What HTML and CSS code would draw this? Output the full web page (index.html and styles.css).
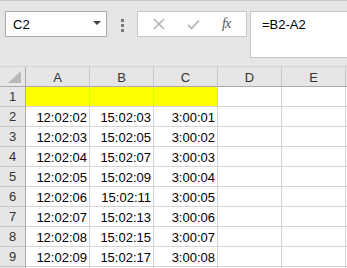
FILE: index.html
```html
<!DOCTYPE html>
<html lang="en">
<head>
    <meta charset="utf-8">
    <title>Sheet</title>
    <link rel="stylesheet" href="styles.css">
</head>
<body>

<div class="formula-bar">
    <div class="name-box">
        <span>C2</span>
        <svg class="drop" width="8" height="4" viewBox="0 0 8 4"><path d="M0 0H8L4 4Z" fill="#444"/></svg>
    </div>
    <div class="grip"><i></i><i></i><i></i></div>
    <div class="fn-box">
        <svg width="12" height="12" viewBox="0 0 12 12"><path d="M1 1L11 11M11 1L1 11" stroke="#b4b4b4" stroke-width="1.6"/></svg>
        <svg width="13" height="11" viewBox="0 0 13 11"><path d="M1 6L4.5 9.5L12 1.5" stroke="#b4b4b4" stroke-width="1.8" fill="none"/></svg>
        <span class="fx">fx</span>
    </div>
    <div class="formula">=B2-A2</div>
</div>

<div class="sheet">
    <div class="hd corner"><svg width="14" height="13" viewBox="0 0 14 13"><path d="M13 0V12H0Z" fill="#b9b9b9"/></svg></div>
    <div class="hd col">A</div>
    <div class="hd col">B</div>
    <div class="hd col">C</div>
    <div class="hd col">D</div>
    <div class="hd col">E</div>
    <div class="hd col"></div>

    <div class="hd row">1</div>
    <div class="cell yellow"></div><div class="cell yellow"></div><div class="cell yellow"></div><div class="cell"></div><div class="cell"></div><div class="cell"></div>

    <div class="hd row">2</div>
    <div class="cell">12:02:02</div><div class="cell">15:02:03</div><div class="cell">3:00:01</div><div class="cell"></div><div class="cell"></div><div class="cell"></div>

    <div class="hd row">3</div>
    <div class="cell">12:02:03</div><div class="cell">15:02:05</div><div class="cell">3:00:02</div><div class="cell"></div><div class="cell"></div><div class="cell"></div>

    <div class="hd row">4</div>
    <div class="cell">12:02:04</div><div class="cell">15:02:07</div><div class="cell">3:00:03</div><div class="cell"></div><div class="cell"></div><div class="cell"></div>

    <div class="hd row">5</div>
    <div class="cell">12:02:05</div><div class="cell">15:02:09</div><div class="cell">3:00:04</div><div class="cell"></div><div class="cell"></div><div class="cell"></div>

    <div class="hd row">6</div>
    <div class="cell">12:02:06</div><div class="cell">15:02:11</div><div class="cell">3:00:05</div><div class="cell"></div><div class="cell"></div><div class="cell"></div>

    <div class="hd row">7</div>
    <div class="cell">12:02:07</div><div class="cell">15:02:13</div><div class="cell">3:00:06</div><div class="cell"></div><div class="cell"></div><div class="cell"></div>

    <div class="hd row">8</div>
    <div class="cell">12:02:08</div><div class="cell">15:02:15</div><div class="cell">3:00:07</div><div class="cell"></div><div class="cell"></div><div class="cell"></div>

    <div class="hd row">9</div>
    <div class="cell">12:02:09</div><div class="cell">15:02:17</div><div class="cell">3:00:08</div><div class="cell"></div><div class="cell"></div><div class="cell"></div>

    <div class="hd row"></div>
    <div class="cell"></div><div class="cell"></div><div class="cell"></div><div class="cell"></div><div class="cell"></div><div class="cell"></div>
</div>

</body>
</html>
```

FILE: styles.css
```css
* {
    box-sizing: border-box;
}

html, body {
    margin: 0;
    height: 268px;
    overflow: hidden;
}

body {
    font-family: "Liberation Sans", Arial, sans-serif;
    font-size: 13px;
    color: #000;
    background: #e6e6e6;
    border-top: 1px solid #c8c8c8;
}

.formula-bar {
    display: flex;
    align-items: flex-start;
    padding: 10px 0 0 5px;
    height: 65px;
}

.name-box {
    display: flex;
    align-items: center;
    justify-content: space-between;
    width: 102px;
    height: 26px;
    padding: 0 5px 0 7px;
    background: #fff;
    border: 1px solid #ababab;
}

.name-box .drop {
    margin-top: -2px;
}

.grip {
    display: flex;
    flex-direction: column;
    align-items: center;
    gap: 2px;
    width: 30px;
    padding-top: 8px;
}

.grip i {
    width: 3px;
    height: 3px;
    background: #7a7a7a;
}

.fn-box {
    display: flex;
    align-items: center;
    width: 110px;
    height: 26px;
    padding: 0 0 0 15px;
    background: #fff;
    border: 1px solid #c6c6c6;
}

.fn-box svg + svg {
    margin-left: 22px;
}

.fx {
    margin-left: 22px;
    font-family: "Liberation Serif", "Times New Roman", serif;
    font-style: italic;
    font-size: 14px;
    color: #555;
    letter-spacing: -1px;
}

.formula {
    flex: 1;
    height: 47px;
    margin-left: 3px;
    padding: 5px 0 0 11px;
    background: #fff;
    border: 1px solid #c6c6c6;
    border-right: none;
}

.sheet {
    display: grid;
    grid-template-columns: 26px 64px 64px 64px 64px 64px 10px;
    grid-auto-rows: 20px;
    border-top: 1px solid #d4d4d4;
}

.hd {
    display: flex;
    align-items: center;
    justify-content: center;
    background: #e6e6e6;
    color: #333;
}

.col {
    border-right: 1px solid #c6c6c6;
    border-bottom: 1px solid #ababab;
    padding-top: 1px;
}

.row {
    border-right: 1px solid #ababab;
    border-bottom: 1px solid #c6c6c6;
}

.corner {
    justify-content: flex-end;
    align-items: flex-end;
    padding: 0 3px 2px 0;
    border-right: 1px solid #ababab;
    border-bottom: 1px solid #ababab;
}

.cell {
    display: flex;
    align-items: center;
    justify-content: flex-end;
    padding: 1px 2px 0 0;
    background: #fff;
    border-right: 1px solid #d4d4d4;
    border-bottom: 1px solid #d4d4d4;
}

.yellow {
    background: #ffff00;
}
```
